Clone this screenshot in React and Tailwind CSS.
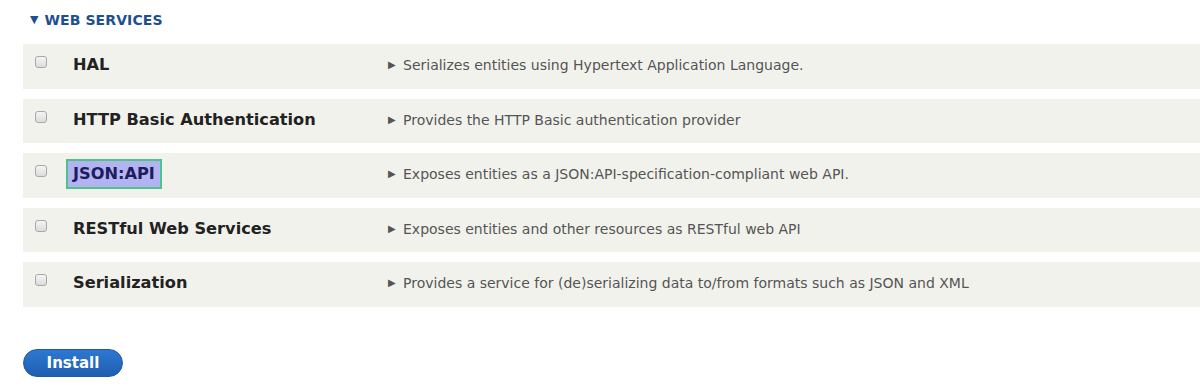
export default function App() {
  const rows = [
    { name: "HAL", desc: "Serializes entities using Hypertext Application Language." },
    { name: "HTTP Basic Authentication", desc: "Provides the HTTP Basic authentication provider" },
    { name: "JSON:API", desc: "Exposes entities as a JSON:API-specification-compliant web API.", hl: true },
    { name: "RESTful Web Services", desc: "Exposes entities and other resources as RESTful web API" },
    { name: "Serialization", desc: "Provides a service for (de)serializing data to/from formats such as JSON and XML" },
  ];
  return (
    <div className="w-[1200px] h-[388px] bg-white overflow-hidden pl-[23px]" style={{ fontFamily: '"DejaVu Sans", sans-serif' }}>
      <div className="h-[44px] pt-[11px] pl-[7px] flex items-start gap-[6px] text-[#1e4f8f]">
        <span className="text-[11px] leading-[18px]">▼</span>
        <span className="text-[14px] font-bold leading-[18px] tracking-[0.1px]">WEB SERVICES</span>
      </div>
      <div className="flex flex-col gap-[10px] w-[1200px]">
        {rows.map((r) => (
          <div key={r.name} className="h-[44.5px] bg-[#f2f2ed] flex items-start">
            <div className="w-[50px] pl-[12px] pt-[12px]">
              <div className="w-[12px] h-[12px] rounded-[3px] border border-[#a8a8a8] bg-gradient-to-b from-[#f4f4f4] to-[#dcdcdc]" />
            </div>
            <div className="w-[315px] pt-[10px] flex">
              {r.hl ? (
                <span className="ml-[-7px] -mt-[4px] px-[5px] border-2 border-[#4cc28c] bg-[#b3b3f2] text-[#1d1d5e] text-[16.2px] font-bold leading-[26px]">
                  {r.name}
                </span>
              ) : (
                <span className="text-[16.2px] font-bold leading-[22px] text-[#222]">{r.name}</span>
              )}
            </div>
            <div className="pt-[12px] flex items-center text-[14px] leading-[18px] text-[#555]">
              <span className="text-[10px] w-[15px] text-[#555]">▶</span>
              <span>{r.desc}</span>
            </div>
          </div>
        ))}
      </div>
      <div className="mt-[42px]">
        <button className="w-[100px] h-[28px] rounded-full bg-gradient-to-b from-[#2d78d3] to-[#1f5faf] border border-[#1e5aa6] text-white text-[15px] font-bold leading-[26px]">
          Install
        </button>
      </div>
    </div>
  );
}
